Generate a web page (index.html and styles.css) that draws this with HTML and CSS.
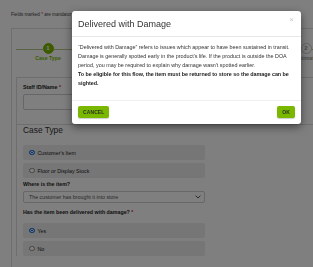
FILE: index.html
```html
<!DOCTYPE html>
<html lang="en">
<head>
<meta charset="utf-8">
<title>Delivered with Damage</title>
<link rel="stylesheet" href="styles.css">
</head>
<body>
<div class="page">
  <p class="note">Fields marked <span class="req">*</span> are mandatory</p>
  <div class="card">
    <div class="stepper">
      <div class="step active">
        <span class="step-num">1</span>
        <span class="step-label">Case Type</span>
      </div>
      <div class="step">
        <span class="step-num">2</span>
        <span class="step-label">Estimate</span>
      </div>
    </div>
    <div class="panel">
      <section class="sec staff">
        <label class="lbl">Staff ID/Name <span class="req">*</span></label>
        <div class="input"></div>
      </section>
      <section class="sec case">
        <h2 class="sec-title">Case Type</h2>
        <div class="opt"><span class="radio on"></span>Customer's Item</div>
        <div class="opt"><span class="radio"></span>Floor or Display Stock</div>
        <label class="lbl q1">Where is the item?</label>
        <div class="select">
          <span>The customer has brought it into store</span>
          <svg class="chev" width="6" height="4" viewBox="0 0 6 4"><path d="M0.6 0.6 L3 3 L5.4 0.6" fill="none" stroke="#444" stroke-width="0.9"/></svg>
        </div>
        <label class="lbl q2">Has the item been delivered with damage? <span class="req">*</span></label>
        <div class="opt first"><span class="radio on"></span>Yes</div>
        <div class="opt"><span class="radio"></span>No</div>
      </section>
    </div>
  </div>
</div>
<div class="backdrop"></div>
<div class="modal-wrap">
  <div class="modal">
    <div class="modal-header">
      <h1 class="modal-title">Delivered with Damage</h1>
      <span class="close">×</span>
    </div>
    <div class="modal-body">
      <p>“Delivered with Damage” refers to issues which appear to have been sustained in transit. Damage is generally spotted early in the product's life. If the product is outside the DOA period, you may be required to explain why damage wasn't spotted earlier.</p>
      <p class="strong">To be eligible for this flow, the item must be returned to store so the damage can be sighted.</p>
    </div>
    <div class="modal-footer">
      <button class="btn">Cancel</button>
      <button class="btn">OK</button>
    </div>
  </div>
</div>
</body>
</html>
```
FILE: styles.css
```css
html, body {
  margin: 0;
  padding: 0;
  overflow: hidden;
  background: #fff;
  font-family: "Liberation Sans", Arial, sans-serif;
  color: #333;
}
.page {
  width: 520px;
  padding: 0 0 0 11px;
}
.note {
  margin: 0;
  padding-top: 12px;
  height: 16px;
  font-size: 4.6px;
  line-height: 6px;
  color: #444;
}
.req { color: #e02020; }
.card {
  border: 1px solid #dcdcdc;
  border-right: none;
  border-bottom: none;
  padding: 0 0 0 4px;
  height: 300px;
}
.stepper {
  position: relative;
  display: flex;
  gap: 194px;
  padding-top: 14px;
  height: 34px;
}
.stepper::before {
  content: "";
  position: absolute;
  left: 0;
  right: 0;
  top: 20px;
  height: 1px;
  background: #b3c98e;
}
.step {
  position: relative;
  width: 64px;
  display: flex;
  flex-direction: column;
  align-items: center;
}
.step-num {
  width: 9px;
  height: 9px;
  border-radius: 50%;
  border: 1px solid #ccc;
  background: #fff;
  color: #999;
  font-size: 6px;
  font-weight: bold;
  line-height: 9px;
  text-align: center;
}
.step.active .step-num {
  background: #7ab800;
  border-color: #7ab800;
  color: #fff;
}
.step-label {
  margin-top: 1px;
  font-size: 5.2px;
  line-height: 7px;
  font-weight: bold;
  color: #999;
}
.step.active .step-label { color: #7ab800; }
.panel {
  border-left: 1px solid #dcdcdc;
  border-top: 1px solid #dcdcdc;
  padding-left: 6px;
}
.sec { width: 182px; }
.staff {
  padding: 6px 0 15px;
  position: relative;
}
.staff::after {
  content: "";
  position: absolute;
  left: -7px;
  right: -400px;
  bottom: 0;
  height: 1px;
  background: #dcdcdc;
}
.lbl {
  display: block;
  font-size: 5.3px;
  line-height: 7px;
  font-weight: bold;
  color: #222;
}
.input {
  margin-top: 3px;
  height: 14px;
  border: 1px solid #ccc;
  border-radius: 2px;
  background: #fff;
}
.case { padding-top: 1px; }
.sec-title {
  margin: 0 0 11px;
  font-size: 8.4px;
  line-height: 8px;
  font-weight: normal;
  color: #333;
}
.opt {
  display: flex;
  align-items: center;
  gap: 3px;
  height: 15px;
  padding-left: 6px;
  margin-bottom: 3px;
  background: #ececec;
  border-radius: 2px;
  font-size: 5.3px;
  color: #222;
}
.radio {
  width: 3.5px;
  height: 3.5px;
  border-radius: 50%;
  border: 0.6px solid #888;
  background: #fff;
}
.radio.on {
  border-color: #1c6fe0;
  background: #1c6fe0;
  box-shadow: inset 0 0 0 0.8px #fff;
}
.q1 { margin-top: 3px; }
.select {
  display: flex;
  align-items: center;
  justify-content: space-between;
  margin-top: 3px;
  height: 10px;
  padding: 0 3px 0 5px;
  border: 1px solid #cfcfcf;
  border-radius: 2px;
  background: #fff;
  font-size: 5.3px;
  color: #555;
}
.q2 { margin-top: 6px; }
.opt.first { margin-top: 7px; }
.backdrop {
  position: fixed;
  inset: 0;
  background: rgba(0, 0, 0, 0.5);
}
.modal-wrap {
  position: fixed;
  top: 11px;
  left: 72px;
}
.modal {
  width: 229px;
  background: #fff;
  border-radius: 3px;
  box-shadow: 0 3px 9px rgba(0, 0, 0, 0.5);
}
.modal-header {
  display: flex;
  justify-content: space-between;
  align-items: flex-start;
  height: 25px;
  padding: 0 7px 0 6px;
  border-bottom: 1px solid #e8e8e8;
}
.modal-title {
  margin: 0;
  font-size: 9px;
  line-height: 26px;
  font-weight: normal;
  color: #333;
}
.close {
  margin-top: 5px;
  font-size: 8px;
  line-height: 8px;
  color: #c4c4c4;
}
.modal-body {
  padding: 6px 8px 12px 6px;
  font-size: 5.4px;
  line-height: 9px;
  color: #333;
}
.modal-body p { margin: 0; }
.modal-body .strong {
  font-weight: bold;
  color: #222;
  letter-spacing: -0.04px;
}
.modal-footer {
  display: flex;
  justify-content: space-between;
  padding: 5px 6px 5.5px;
  border-top: 1px solid #eee;
}
.btn {
  height: 12px;
  padding: 0 5px;
  border: none;
  border-radius: 2px;
  background: #7ab800;
  box-shadow: 0 1px 1px rgba(0, 0, 0, 0.2);
  font-family: "Liberation Sans", Arial, sans-serif;
  font-size: 5px;
  font-weight: bold;
  letter-spacing: 0.1px;
  text-transform: uppercase;
  color: #2a3320;
}
```
